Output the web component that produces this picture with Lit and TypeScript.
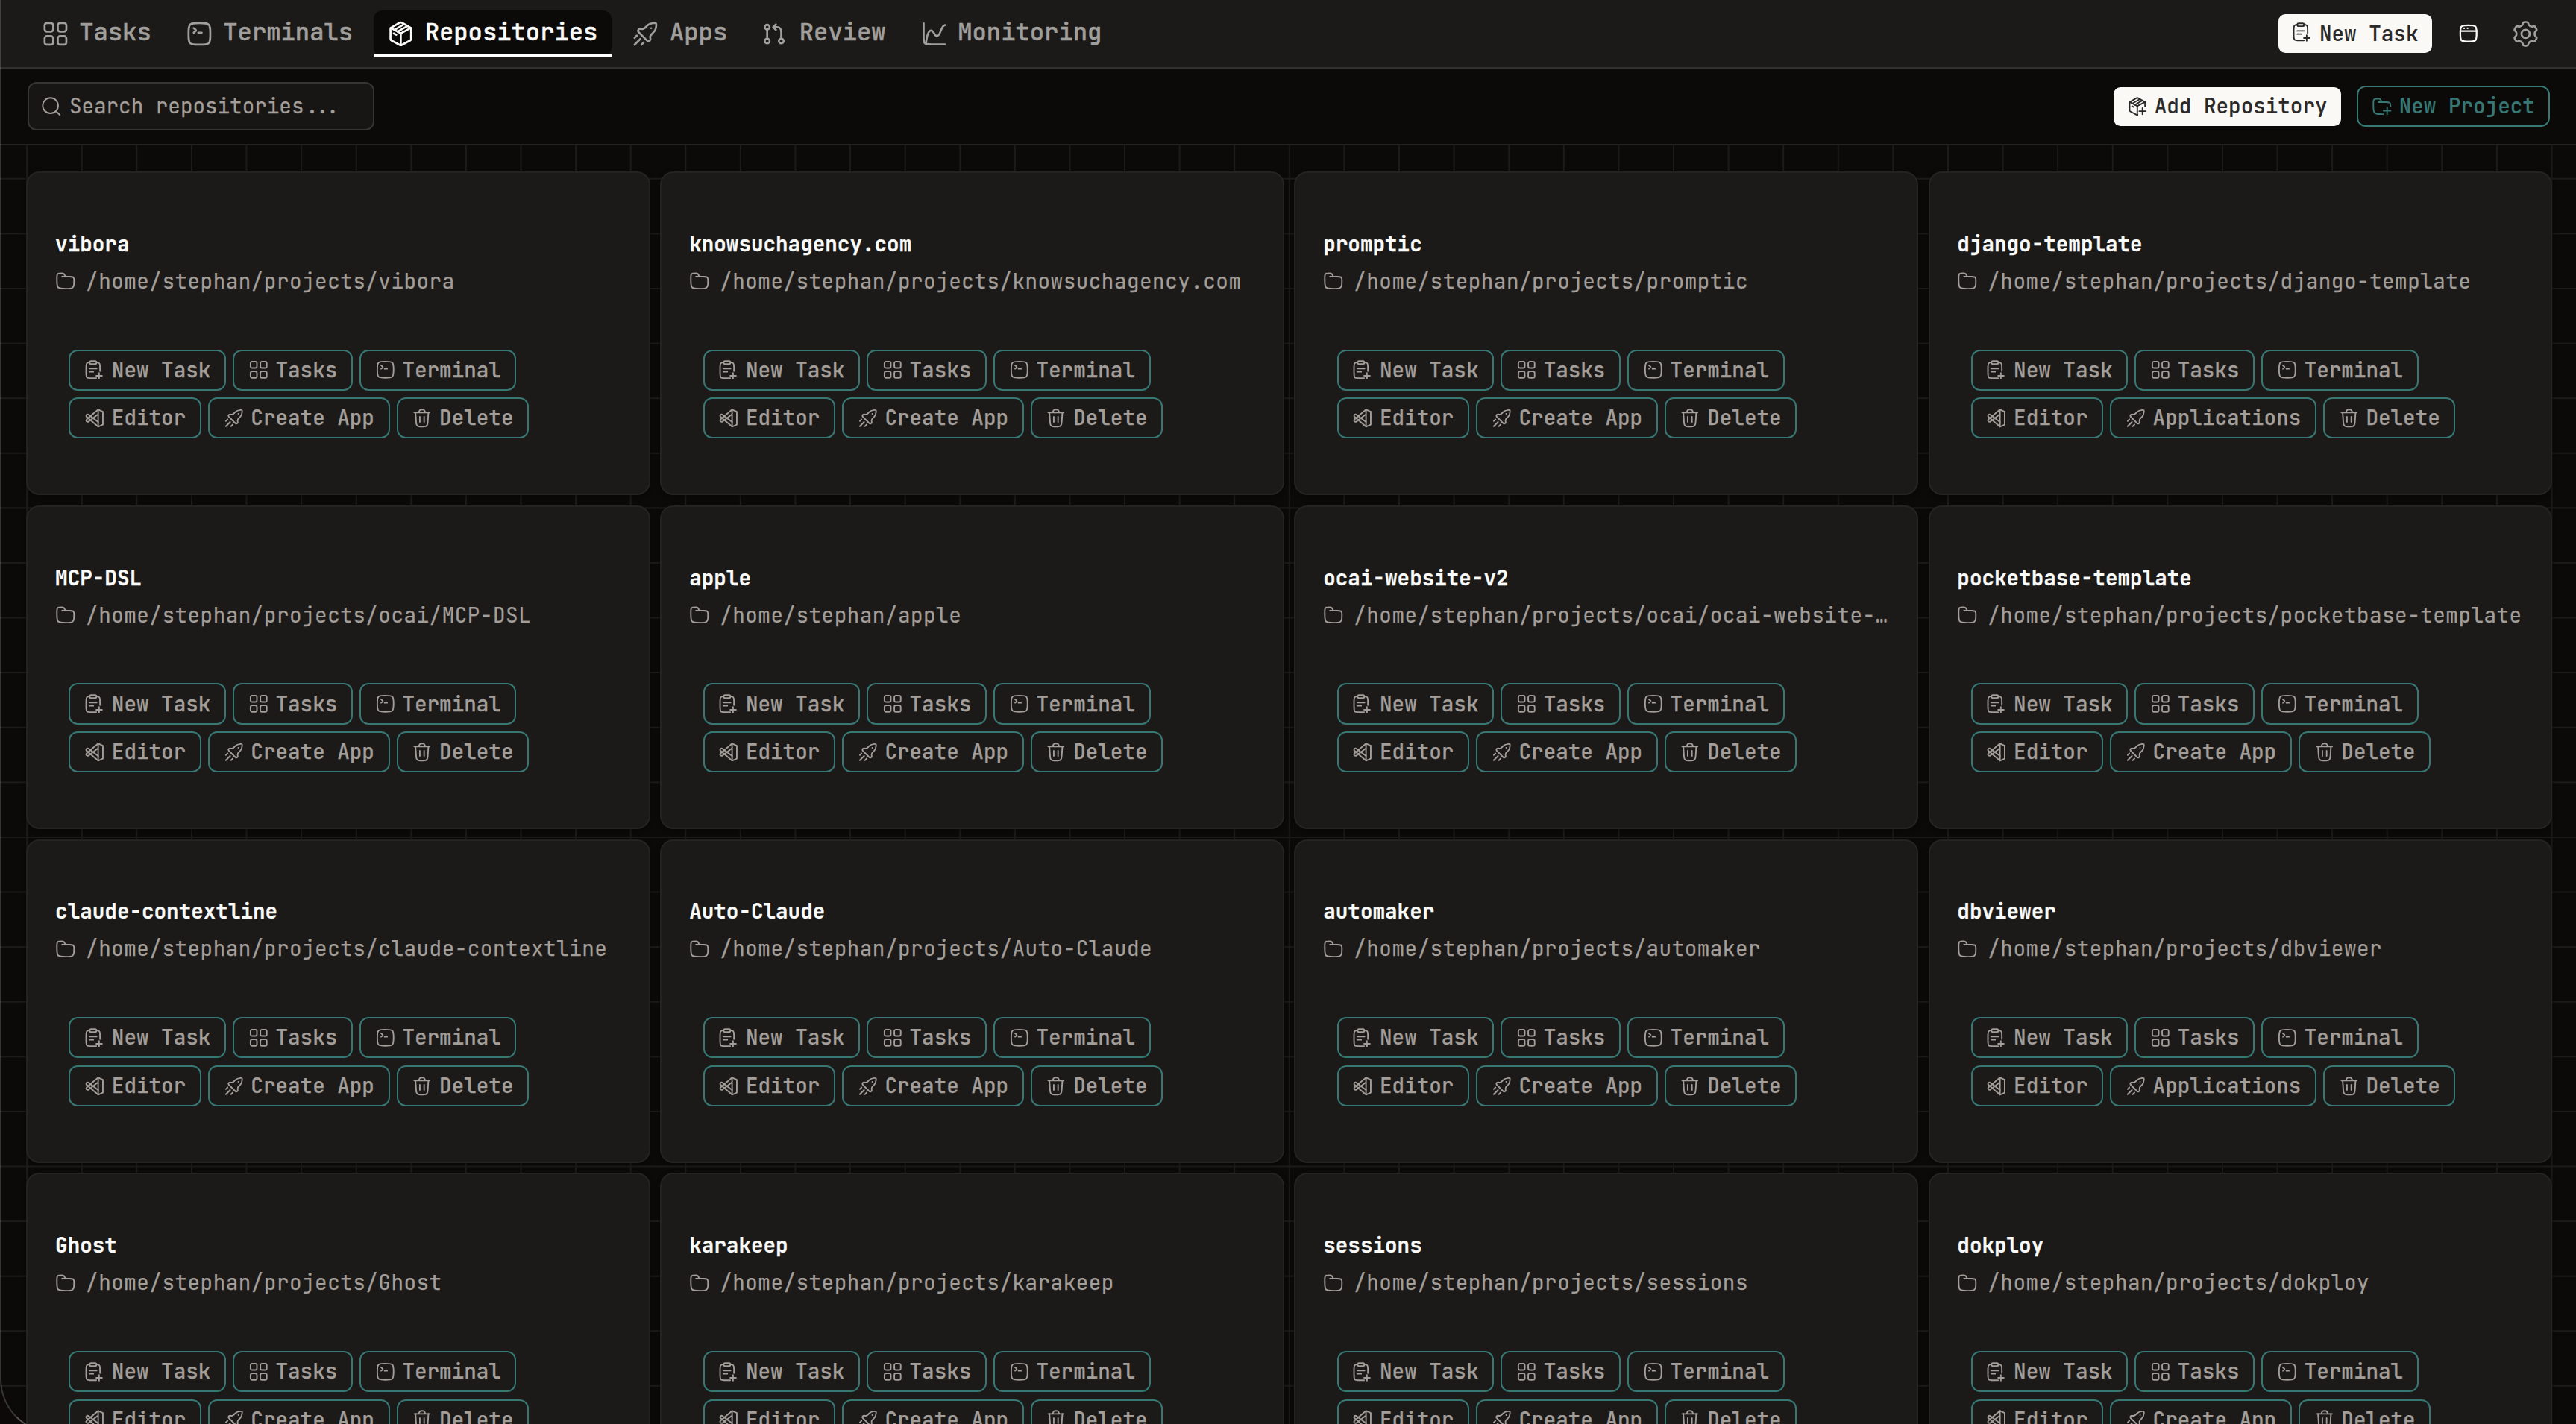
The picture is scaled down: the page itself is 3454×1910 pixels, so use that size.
import { LitElement, html, svg, css } from "lit";
import { customElement, property } from "lit/decorators.js";
import { classMap } from "lit/directives/class-map.js";

/** Outline of a six-toothed gear with softened corners, centred on 12,12. */
function gearPath(): string {
  const pts: Array<[number, number]> = [];
  for (let k = 0; k < 6; k++) {
    const base = k * 60 - 90;
    for (const [r, off] of [[10.6, -11.5], [10.6, 11.5], [8.1, 19], [8.1, 41]]) {
      const a = ((base + off) * Math.PI) / 180;
      pts.push([12 + r * Math.cos(a), 12 + r * Math.sin(a)]);
    }
  }
  const n = pts.length;
  const mix = (a: [number, number], b: [number, number], t: number) =>
    `${(a[0] + (b[0] - a[0]) * t).toFixed(2)} ${(a[1] + (b[1] - a[1]) * t).toFixed(2)}`;
  let d = "";
  pts.forEach((p, i) => {
    const prev = pts[(i + n - 1) % n];
    const next = pts[(i + 1) % n];
    d += `${i ? "L" : "M"}${mix(p, prev, 0.38)}Q${p[0].toFixed(2)} ${p[1].toFixed(2)} ${mix(p, next, 0.38)}`;
  });
  return d + "Z";
}

const ROUND_SQUARE =
  "M2.5 12C2.5 7.52 2.5 5.28 3.89 3.89C5.28 2.5 7.52 2.5 12 2.5C16.48 2.5 18.72 2.5 20.11 3.89C21.5 5.28 21.5 7.52 21.5 12C21.5 16.48 21.5 18.72 20.11 20.11C18.72 21.5 16.48 21.5 12 21.5C7.52 21.5 5.28 21.5 3.89 20.11C2.5 18.72 2.5 16.48 2.5 12Z";

const ICONS: Record<string, string[]> = {
  grid: [
    "M4.5 2.5H8A2 2 0 0 1 10 4.5V8A2 2 0 0 1 8 10H4.5A2 2 0 0 1 2.5 8V4.5A2 2 0 0 1 4.5 2.5Z",
    "M16 2.5H19.5A2 2 0 0 1 21.5 4.5V8A2 2 0 0 1 19.5 10H16A2 2 0 0 1 14 8V4.5A2 2 0 0 1 16 2.5Z",
    "M4.5 14H8A2 2 0 0 1 10 16V19.5A2 2 0 0 1 8 21.5H4.5A2 2 0 0 1 2.5 19.5V16A2 2 0 0 1 4.5 14Z",
    "M16 14H19.5A2 2 0 0 1 21.5 16V19.5A2 2 0 0 1 19.5 21.5H16A2 2 0 0 1 14 19.5V16A2 2 0 0 1 16 14Z",
  ],
  terminal: [
    ROUND_SQUARE,
    "M7 7L8.23 8.06C8.74 8.5 9 8.72 9 9C9 9.28 8.74 9.5 8.23 9.94L7 11",
    "M11 11H14",
  ],
  box: [
    "M3 7V16.4Q3 17.3 3.8 17.8L11 21.7Q12 22.3 13 21.7L20.2 17.8Q21 17.3 21 16.4V7",
    "M3.2 6.8L10.9 2.3Q12 1.7 13.1 2.3L20.8 6.8L13 11Q12 11.5 11 11Z",
    "M12 11.5V22",
    "M6.4 8.5L14.9 3.5",
    "M9.2 10L17.8 5.1",
    "M5.8 11.6L8 12.8",
  ],
  boxAdd: [
    "M3 7V16.4Q3 17.3 3.8 17.8L11 21.7Q11.6 22 12.4 21.8",
    "M21 7V12.3",
    "M3.2 6.8L10.9 2.3Q12 1.7 13.1 2.3L20.8 6.8L13 11Q12 11.5 11 11Z",
    "M12 11.5V22",
    "M6.4 8.5L14.9 3.5",
    "M9.2 10L17.8 5.1",
    "M5.8 11.6L8 12.8",
    "M18 13.8V21.2M14.3 17.5H22",
  ],
  rocket: [
    "M11.8013 6.48949L13.2869 5.00392C14.9596 3.3312 17.1495 2.63737 19.4717 2.5221C20.3751 2.47725 20.8267 2.45483 21.1859 2.81409C21.5452 3.17335 21.5228 3.62503 21.4779 4.5284C21.3626 6.85062 20.6688 9.04046 18.9961 10.7132L17.5105 12.1987C16.2871 13.4221 15.9393 13.77 16.1961 15.0969C16.4496 16.1107 16.695 17.0923 15.9578 17.8294C15.0637 18.7236 14.2481 18.7236 13.3539 17.8294L6.17058 10.6461C5.27644 9.75196 5.27641 8.93639 6.17058 8.04225C6.90773 7.30509 7.88941 7.55044 8.90321 7.80389C10.2301 8.06073 10.578 7.71286 11.8013 6.48949Z",
    "M16.9959 7H17.0049",
    "M2.5 21.5L7.5 16.5",
    "M8.5 21.5L10.5 19.5",
    "M2.5 15.5L4.5 13.5",
  ],
  pull: [
    "M5 4A2.1 2.1 0 1 1 5 8.2A2.1 2.1 0 1 1 5 4Z",
    "M5 16.2A2.1 2.1 0 1 1 5 20.4A2.1 2.1 0 1 1 5 16.2Z",
    "M17.3 16.2A2.1 2.1 0 1 1 17.3 20.4A2.1 2.1 0 1 1 17.3 16.2Z",
    "M5 8.2V16.2",
    "M17.3 16.2V10.8C17.3 7.6 16.4 6.1 13.6 6.1H10.5",
    "M12.6 3.7L10.2 6.1L12.6 8.5",
  ],
  chart: [
    "M21.5 21.2H10C6.5 21.2 4.9 21.2 3.9 20.2C2.9 19.2 2.9 17.6 2.9 14.2V2.8",
    "M5 20C5.4 16.5 6.6 9 9.4 9C12.1 9 11.9 13.9 14.5 13.9C18 13.9 17.9 4.6 21.5 4.3",
  ],
  clipboard: [
    "M14 22H8.5C5.3 22 3.9 22 3.05 21C2.2 20 2.2 18.6 2.2 15.5V10C2.2 6.9 2.2 5.3 3.05 4.4C3.7 3.7 4.6 3.6 6.3 3.5",
    "M14.2 3.5C16 3.6 16.8 3.7 17.5 4.4C18.4 5.3 18.4 6.9 18.4 10V13.8",
    "M8 1.9H12.6A1.7 1.7 0 0 1 12.6 5.3H8A1.7 1.7 0 0 1 8 1.9Z",
    "M6.2 10.8H14.4",
    "M6.2 14.5H10.6",
    "M17.3 15.8V22.4M14 19.1H20.7",
  ],
  editor: [
    "M16.2 2L21.7 4.4V19.6L16.2 22L2.7 10.5Q1.7 9.4 2.6 8.3Q3.8 7.1 5 8L16.2 16.6",
    "M16.2 22V2L2.7 13.5Q1.7 14.6 2.6 15.7Q3.8 16.9 5 16L16.2 7.4",
  ],
  trash: [
    "M19.5 5.5L18.8803 15.5251C18.722 18.0864 18.6428 19.3671 18.0008 20.2879C17.6833 20.7431 17.2747 21.1273 16.8007 21.416C15.8421 22 14.559 22 11.9927 22C9.42312 22 8.1383 22 7.17905 21.4149C6.7048 21.1257 6.296 20.7408 5.97868 20.2848C5.33688 19.3626 5.25945 18.0801 5.10461 15.5152L4.5 5.5",
    "M3 5.5H21M16.0557 5.5L15.3731 4.09173C14.9196 3.15626 14.6928 2.68852 14.3017 2.39681C13.9 2 13.0741 2 12.0345 2C10.9688 2 10.436 2 9.99568 2.23412C9.32164 2.7167 9.10063 3.20155 8.65861 4.17126L8.05292 5.5",
    "M9.5 16.5V10.5",
    "M14.5 16.5V10.5",
  ],
  folder: [
    "M8 7H16.75C18.8567 7 19.91 7 20.6667 7.50559C20.9943 7.72447 21.2755 8.00572 21.4944 8.33329C22 9.08996 22 10.1433 22 12.25C22 15.7612 22 17.5167 21.1573 18.7779C20.7926 19.3238 20.3238 19.7926 19.7779 20.1573C18.5167 21 16.7612 21 13.25 21H12C7.28595 21 4.92893 21 3.46447 19.5355C2 18.0711 2 15.714 2 11V7.94427C2 6.1278 2 5.21956 2.38032 4.53806C2.65142 4.05227 3.05227 3.65142 3.53806 3.38032C4.21956 3 5.1278 3 6.94427 3C8.10802 3 8.6899 3 9.19926 3.19101C10.3622 3.62712 10.8418 4.68358 11.3666 5.73313L12 7",
  ],
  folderAdd: [
    "M13.3 21H12C7.286 21 4.929 21 3.464 19.536C2 18.071 2 15.714 2 11V7.944C2 6.128 2 5.22 2.38 4.538C2.651 4.052 3.052 3.651 3.538 3.38C4.22 3 5.128 3 6.944 3C8.108 3 8.69 3 9.199 3.191C10.362 3.627 10.842 4.684 11.367 5.733L12 7M8 7H16.75C18.857 7 19.91 7 20.667 7.506C20.994 7.724 21.276 8.006 21.494 8.333C21.95 9 22 9.9 22 11.6",
    "M18 12.8V21.2M13.8 17H22.2",
  ],
  search: ["M11 2A9 9 0 1 1 11 20A9 9 0 1 1 11 2Z", "M17.5 17.5L22 22"],
  browser: [ROUND_SQUARE, "M2.5 9.3H21.5", "M7 6H7.01", "M11 6H11.01"],
  gear: [gearPath(), "M12 8.4A3.6 3.6 0 1 1 12 15.6A3.6 3.6 0 1 1 12 8.4Z"],
};

@customElement("ui-icon")
export class UiIcon extends LitElement {
  @property() name = "grid";
  @property({ type: Number }) weight = 1.65;

  static styles = css`
    :host {
      display: block;
      flex: none;
      width: 27.6px;
      height: 27.6px;
    }
    .glyph {
      display: block;
      width: 100%;
      height: 100%;
      fill: none;
      stroke: currentColor;
      stroke-linecap: round;
      stroke-linejoin: round;
      overflow: visible;
    }
  `;

  render() {
    return html`<svg class="glyph" viewBox="0 0 24 24" stroke-width=${this.weight} aria-hidden="true">
      ${(ICONS[this.name] ?? []).map((d) => svg`<path d=${d}></path>`)}
    </svg>`;
  }
}

@customElement("repo-card")
export class RepoCard extends LitElement {
  @property() name = "";
  @property() path = "";
  @property() app = "Create App";

  static styles = css`
    :host {
      display: block;
      min-width: 0;
    }
    .card {
      box-sizing: border-box;
      height: 434px;
      padding: 76.8px 36.8px 0;
      border: 2px solid rgba(255, 255, 255, 0.045);
      border-radius: 18px;
      background: #1b1a18;
      box-shadow: 0 2px 6px rgba(0, 0, 0, 0.35);
    }
    .name {
      margin: 0;
      font-size: 27.6px;
      font-weight: 600;
      line-height: 36.8px;
      color: #fafaf9;
      -webkit-text-stroke: 0.25px currentColor;
    }
    .path {
      display: flex;
      align-items: center;
      gap: 13.4px;
      margin-top: 13.2px;
      line-height: 36.8px;
      color: #a39e99;
      -webkit-text-stroke: 0.25px currentColor;
    }
    .path-text {
      min-width: 0;
      overflow: hidden;
      white-space: nowrap;
      text-overflow: ellipsis;
      letter-spacing: 0.5px;
    }
    .actions {
      display: flex;
      flex-direction: column;
      gap: 9.4px;
      margin-top: 73px;
      padding-left: 18.4px;
    }
    .row {
      display: flex;
      gap: 9.2px;
    }
    .btn {
      box-sizing: border-box;
      display: flex;
      align-items: center;
      gap: 9.2px;
      height: 55.2px;
      padding: 0 18.6px;
      border: 2px solid #377875;
      border-radius: 12px;
      background: none;
      color: #a39e99;
      font: inherit;
      font-weight: 500;
      white-space: nowrap;
      -webkit-text-stroke: 0.25px currentColor;
    }
  `;

  private button(icon: string, label: string) {
    return html`<button class="btn"><ui-icon name=${icon}></ui-icon><span>${label}</span></button>`;
  }

  render() {
    return html`<article class="card">
      <h2 class="name">${this.name}</h2>
      <div class="path"><ui-icon name="folder"></ui-icon><span class="path-text">${this.path}</span></div>
      <div class="actions">
        <div class="row">
          ${this.button("clipboard", "New Task")}${this.button("grid", "Tasks")}${this.button("terminal", "Terminal")}
        </div>
        <div class="row">
          ${this.button("editor", "Editor")}${this.button("rocket", this.app)}${this.button("trash", "Delete")}
        </div>
      </div>
    </article>`;
  }
}

const NAV: Array<[string, string]> = [
  ["grid", "Tasks"],
  ["terminal", "Terminals"],
  ["box", "Repositories"],
  ["rocket", "Apps"],
  ["pull", "Review"],
  ["chart", "Monitoring"],
];

const HOME = "/home/stephan/";
const REPOS: Array<{ name: string; path: string; app?: string }> = [
  { name: "vibora", path: "projects/vibora" },
  { name: "knowsuchagency.com", path: "projects/knowsuchagency.com" },
  { name: "promptic", path: "projects/promptic" },
  { name: "django-template", path: "projects/django-template", app: "Applications" },
  { name: "MCP-DSL", path: "projects/ocai/MCP-DSL" },
  { name: "apple", path: "apple" },
  { name: "ocai-website-v2", path: "projects/ocai/ocai-website-v2" },
  { name: "pocketbase-template", path: "projects/pocketbase-template" },
  { name: "claude-contextline", path: "projects/claude-contextline" },
  { name: "Auto-Claude", path: "projects/Auto-Claude" },
  { name: "automaker", path: "projects/automaker" },
  { name: "dbviewer", path: "projects/dbviewer", app: "Applications" },
  { name: "Ghost", path: "projects/Ghost" },
  { name: "karakeep", path: "projects/karakeep" },
  { name: "sessions", path: "projects/sessions" },
  { name: "dokploy", path: "projects/dokploy" },
];

@customElement("app-root")
export class AppRoot extends LitElement {
  static styles = css`
    :host {
      display: flex;
      flex-direction: column;
      position: relative;
      box-sizing: border-box;
      width: 100%;
      height: 100vh;
      overflow: hidden;
      background: #0b0a08;
      color: #fafaf9;
      font-family: "JetBrains Mono", "DejaVu Sans Mono", "Liberation Mono", monospace;
      font-size: 27.6px;
      line-height: 36.8px;
    }
    .header {
      box-sizing: border-box;
      flex: none;
      display: flex;
      align-items: center;
      justify-content: space-between;
      height: 92px;
      padding: 0 49.2px 0 37.2px;
      border-bottom: 2px solid #31302e;
      background: #1b1a18;
    }
    .nav {
      display: flex;
      gap: 9.2px;
    }
    .tab {
      position: relative;
      display: flex;
      align-items: center;
      gap: 13.8px;
      height: 62px;
      padding: 0 18.4px;
      border-radius: 12px;
      color: #a09f9c;
      font-size: 32.2px;
      font-weight: 500;
      -webkit-text-stroke: 0.4px currentColor;
    }
    .tab-label {
      margin-top: -3px;
    }
    .tab.active {
      background: #0b0a08;
      color: #fafaf9;
    }
    .tab.active::after {
      content: "";
      position: absolute;
      left: 0;
      right: 0;
      bottom: 0;
      height: 4px;
      background: #fff;
    }
    .big {
      width: 36.8px;
      height: 36.8px;
    }
    .tools {
      display: flex;
      align-items: center;
    }
    .btn {
      box-sizing: border-box;
      display: flex;
      align-items: center;
      gap: 9.2px;
      height: 52px;
      padding: 0 18.4px;
      border: 0;
      border-radius: 9.2px;
      background: #faf9f6;
      color: #2a2927;
      font: inherit;
      font-weight: 500;
      white-space: nowrap;
      -webkit-text-stroke: 0.15px currentColor;
    }
    .raised {
      margin-top: -4px;
    }
    .btn.outline {
      height: 55px;
      border: 2px solid #377875;
      border-radius: 12px;
      background: none;
      color: #377875;
    }
    .window {
      margin-left: 35px;
      color: #fafaf9;
    }
    .settings {
      margin-left: 44.6px;
      color: #a09f9c;
    }
    .toolbar {
      box-sizing: border-box;
      flex: none;
      display: flex;
      align-items: center;
      justify-content: space-between;
      height: 103px;
      padding: 0 34.8px 0 37.3px;
      border-bottom: 2px solid #232220;
    }
    .search {
      box-sizing: border-box;
      display: flex;
      align-items: center;
      gap: 10px;
      width: 464.6px;
      height: 65px;
      padding: 0 16px;
      border: 2px solid #363533;
      border-radius: 12px;
      background: #171614;
      color: #a39e99;
      -webkit-text-stroke: 0.25px currentColor;
    }
    .toolbar-actions {
      display: flex;
      align-items: center;
      gap: 20.6px;
    }
    .canvas {
      flex: 1;
      min-height: 0;
      overflow: hidden;
      padding: 35px 32.2px 0 35.3px;
      background-image: linear-gradient(to right, #1c1b1a 2px, transparent 2px),
        linear-gradient(to bottom, #1c1b1a 2px, transparent 2px);
      background-size: 73.6px 73.6px;
      background-position: 35.2px 43.8px;
    }
    .grid {
      display: grid;
      grid-template-columns: repeat(4, minmax(0, 1fr));
      gap: 13.8px;
    }
    .frame {
      position: absolute;
      left: 0;
      right: -100px;
      top: -100px;
      bottom: -12px;
      border-left: 2px solid rgba(255, 255, 255, 0.18);
      border-bottom: 2px solid rgba(255, 255, 255, 0.3);
      border-bottom-left-radius: 72px;
      box-shadow: 0 0 0 80px #0d0908;
      pointer-events: none;
    }
  `;

  render() {
    return html`
      <header class="header">
        <nav class="nav">
          ${NAV.map(
            ([icon, label]) => html`<a class=${classMap({ tab: true, active: label === "Repositories" })}>
              <ui-icon class="big" name=${icon} weight="1.75"></ui-icon><span class="tab-label">${label}</span>
            </a>`
          )}
        </nav>
        <div class="tools">
          <button class="btn"><ui-icon class="raised" name="clipboard"></ui-icon><span>New Task</span></button>
          <ui-icon class="window" name="browser" weight="2"></ui-icon>
          <ui-icon class="big settings" name="gear" weight="1.75"></ui-icon>
        </div>
      </header>
      <section class="toolbar">
        <div class="search"><ui-icon name="search"></ui-icon><span>Search repositories...</span></div>
        <div class="toolbar-actions">
          <button class="btn"><ui-icon name="boxAdd"></ui-icon><span>Add Repository</span></button>
          <button class="btn outline"><ui-icon name="folderAdd"></ui-icon><span>New Project</span></button>
        </div>
      </section>
      <main class="canvas">
        <div class="grid">
          ${REPOS.map(
            (r) => html`<repo-card .name=${r.name} .path=${HOME + r.path} .app=${r.app ?? "Create App"}></repo-card>`
          )}
        </div>
      </main>
      <div class="frame"></div>
    `;
  }
}
